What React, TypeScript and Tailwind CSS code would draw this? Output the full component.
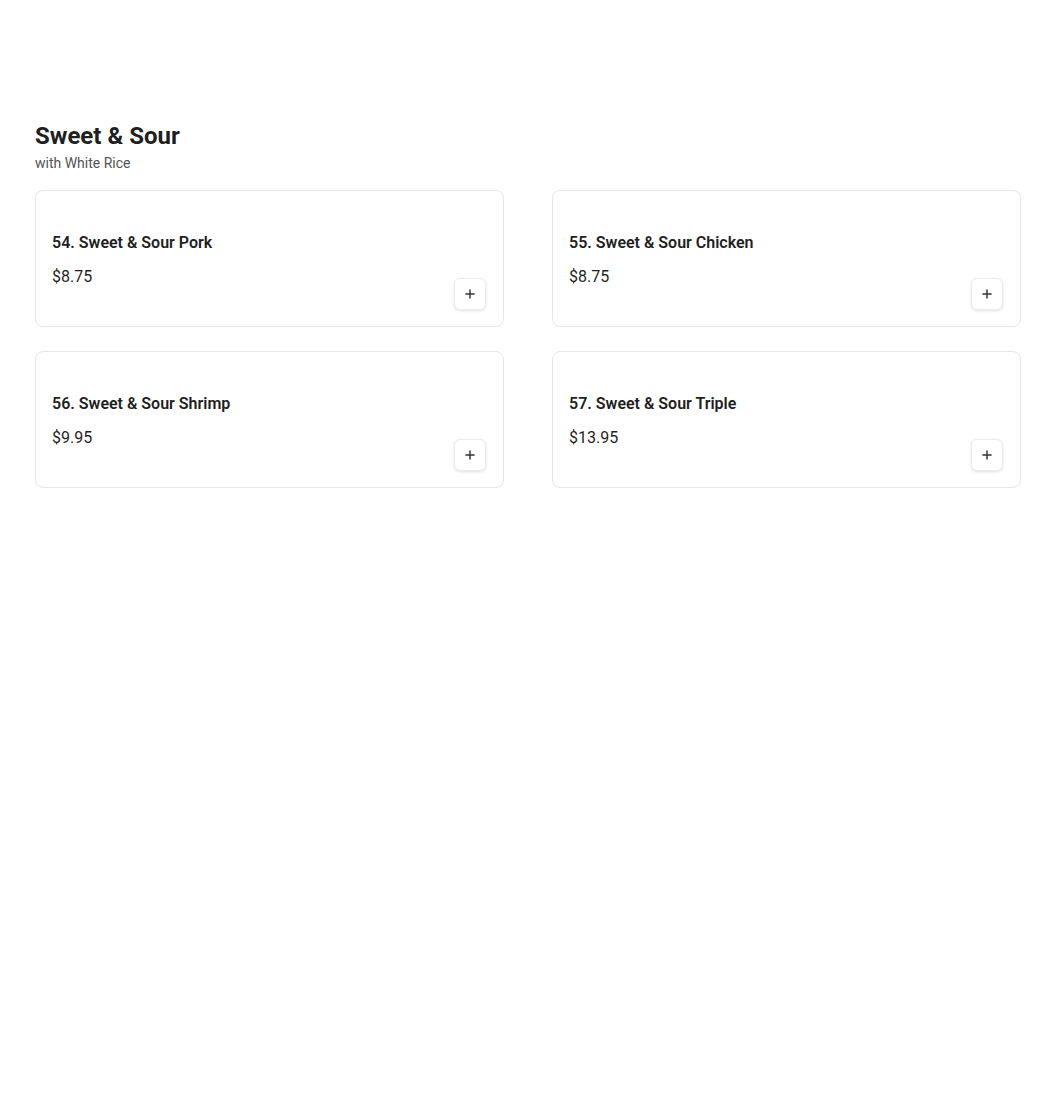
import { Plus } from "lucide-react";

const items = [
  { id: 54, name: "Sweet & Sour Pork", price: "$8.75" },
  { id: 55, name: "Sweet & Sour Chicken", price: "$8.75" },
  { id: 56, name: "Sweet & Sour Shrimp", price: "$9.95" },
  { id: 57, name: "Sweet & Sour Triple", price: "$13.95" },
];

export default function App() {
  return (
    <div
      className="min-h-[1101px] bg-white pl-[35px] pr-[29px] pt-[120px] text-[#1f1f1f]"
      style={{ fontFamily: "Roboto, 'Liberation Sans', sans-serif" }}
    >
      {/* Section header */}
      <h2 className="text-[24px] font-bold leading-[32px] text-[#1f1f1f]">Sweet &amp; Sour</h2>
      <p className="mt-[1px] text-[14px] leading-[20px] text-[#555]">with White Rice</p>

      {/* Items */}
      <div className="mt-[17px] grid grid-cols-2 gap-x-[48px] gap-y-[24px]">
        {items.map((item) => (
          <div
            key={item.id}
            className="flex h-[137px] items-end justify-between rounded-lg border border-[#e6e6e6] bg-white pl-4 pr-[17px] pb-[16px] pt-[40px]"
          >
            <div className="self-start">
              <h3 className="text-[16px] font-semibold leading-[24px] text-[#1f1f1f]">
                {item.id}. {item.name}
              </h3>
              <p className="mt-[10px] text-[16px] leading-[24px] text-[#1f1f1f]">{item.price}</p>
            </div>
            <button className="flex h-8 w-8 items-center justify-center rounded-md border border-[#ececec] bg-white shadow-[0_1px_3px_rgba(0,0,0,0.12)]">
              <Plus className="h-3.5 w-3.5 text-[#333]" strokeWidth={2.5} />
            </button>
          </div>
        ))}
      </div>
    </div>
  );
}
